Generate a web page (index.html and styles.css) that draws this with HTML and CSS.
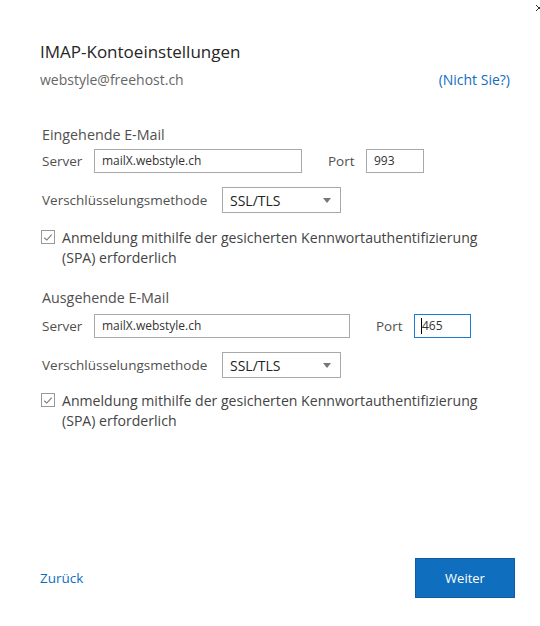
FILE: index.html
```html
<!DOCTYPE html>
<html lang="de">
<head>
<meta charset="utf-8">
<title>IMAP-Kontoeinstellungen</title>
<link rel="stylesheet" href="styles.css">
</head>
<body>
<div class="page">
  <svg class="close" width="6" height="14" viewBox="0 0 6 14"><path d="M2 3 L8 9 M8 3 L2 9" stroke="#333" stroke-width="1" fill="none"/></svg>
  <h1 class="title">IMAP-Kontoeinstellungen</h1>
  <div class="account">
    <span class="email">webstyle@freehost.ch</span>
    <a class="link">(Nicht Sie?)</a>
  </div>

  <section class="section first">
    <div class="section-title">Eingehende E-Mail</div>
    <div class="row server-row">
      <span class="label server-label">Server</span>
      <div class="input server-in">mailX.webstyle.ch</div>
      <span class="label port-label">Port</span>
      <div class="input port-in">993</div>
    </div>
    <div class="row select-row">
      <span class="label enc-label">Verschlüsselungsmethode</span>
      <div class="select"><span>SSL/TLS</span><span class="arrow"></span></div>
    </div>
    <div class="check">
      <div class="box"><svg width="13" height="13" viewBox="0 0 13 13"><path d="M2.5 6.8 L5.2 9.3 L10.5 3.5" stroke="#777" stroke-width="1.2" fill="none"/></svg></div>
      <div class="check-text">Anmeldung mithilfe der gesicherten Kennwortauthentifizierung (SPA) erforderlich</div>
    </div>
  </section>

  <section class="section second">
    <div class="section-title">Ausgehende E-Mail</div>
    <div class="row server-row">
      <span class="label server-label">Server</span>
      <div class="input server-in wide">mailX.webstyle.ch</div>
      <span class="label port-label">Port</span>
      <div class="input port-in focus"><span class="caret"></span>465</div>
    </div>
    <div class="row select-row">
      <span class="label enc-label">Verschlüsselungsmethode</span>
      <div class="select"><span>SSL/TLS</span><span class="arrow"></span></div>
    </div>
    <div class="check">
      <div class="box"><svg width="13" height="13" viewBox="0 0 13 13"><path d="M2.5 6.8 L5.2 9.3 L10.5 3.5" stroke="#777" stroke-width="1.2" fill="none"/></svg></div>
      <div class="check-text">Anmeldung mithilfe der gesicherten Kennwortauthentifizierung (SPA) erforderlich</div>
    </div>
  </section>

  <div class="footer">
    <a class="back">Zurück</a>
    <button class="next">Weiter</button>
  </div>
</div>
</body>
</html>
```

FILE: styles.css
```css
* { box-sizing: border-box; }
html, body { margin: 0; padding: 0; background: #fff; }
body { font-family: "Open Sans", "Noto Sans", sans-serif; color: #444; }

.page {
  position: relative;
  width: 540px;
  height: 626px;
  padding: 40px 30px 0 40px;
  display: flex;
  flex-direction: column;
}

.close { position: absolute; top: 2px; right: 0; }

.title {
  margin: 0;
  font-size: 17px;
  font-weight: 400;
  line-height: 24px;
  color: #262626;
}

.account {
  margin-top: 6px;
  display: flex;
  justify-content: space-between;
  line-height: 20px;
  font-size: 14px;
}
.email { color: #666; }
.link { color: #106ebe; }

.section { padding-left: 2px; }
.first { margin-top: 35px; }
.second { margin-top: 20px; }

.section-title { font-size: 14.3px; line-height: 20px; color: #505050; }

.row { display: flex; align-items: center; }
.server-row { margin-top: 4px; }
.second .server-row { margin-top: 6px; }
.select-row { margin-top: 14px; }

.label { font-size: 13.5px; color: #505050; }
.server-label { width: 52px; }
.port-label { margin-left: 26px; width: 38px; }
.enc-label { width: 180px; }

.input {
  height: 24px;
  border: 1px solid #a8a8a8;
  padding: 0 7px;
  font-size: 12px;
  line-height: 22px;
  color: #333;
  display: flex;
  align-items: center;
}
.server-in { width: 208px; }
.server-in.wide { width: 256px; }
.port-in { width: 58px; }
.port-in.focus { border-color: #1a7ad4; padding-left: 6px; width: 57px; }
.caret { width: 1px; height: 16px; background: #000; }

.select {
  width: 119px;
  height: 26px;
  border: 1px solid #a8a8a8;
  padding: 0 7px;
  font-size: 14px;
  color: #222;
  display: flex;
  align-items: center;
  justify-content: space-between;
}
.arrow {
  width: 0; height: 0;
  border-left: 4.5px solid transparent;
  border-right: 4.5px solid transparent;
  border-top: 5px solid #777;
  margin-right: 2px;
}

.check {
  margin-top: 15px;
  display: flex;
  align-items: flex-start;
}
.second .check { margin-top: 13px; }
.box {
  width: 14px; height: 14px;
  border: 1px solid #999;
  margin-top: 2px;
  margin-left: -1px;
  flex: none;
  display: flex;
  align-items: center;
  justify-content: center;
}
.check-text {
  margin-left: 7px;
  font-size: 14.1px;
  line-height: 20px;
  color: #444;
  width: 430px;
}

.footer {
  margin-top: auto;
  margin-bottom: 28px;
  margin-right: -5px;
  display: flex;
  justify-content: space-between;
  align-items: center;
}
.back { color: #106ebe; font-size: 13.5px; }
.next {
  width: 100px;
  height: 40px;
  background: #106ebe;
  border: 1px solid #0c5da3;
  color: #fff;
  font-family: inherit;
  font-size: 13px;
  padding: 0;
}
```
